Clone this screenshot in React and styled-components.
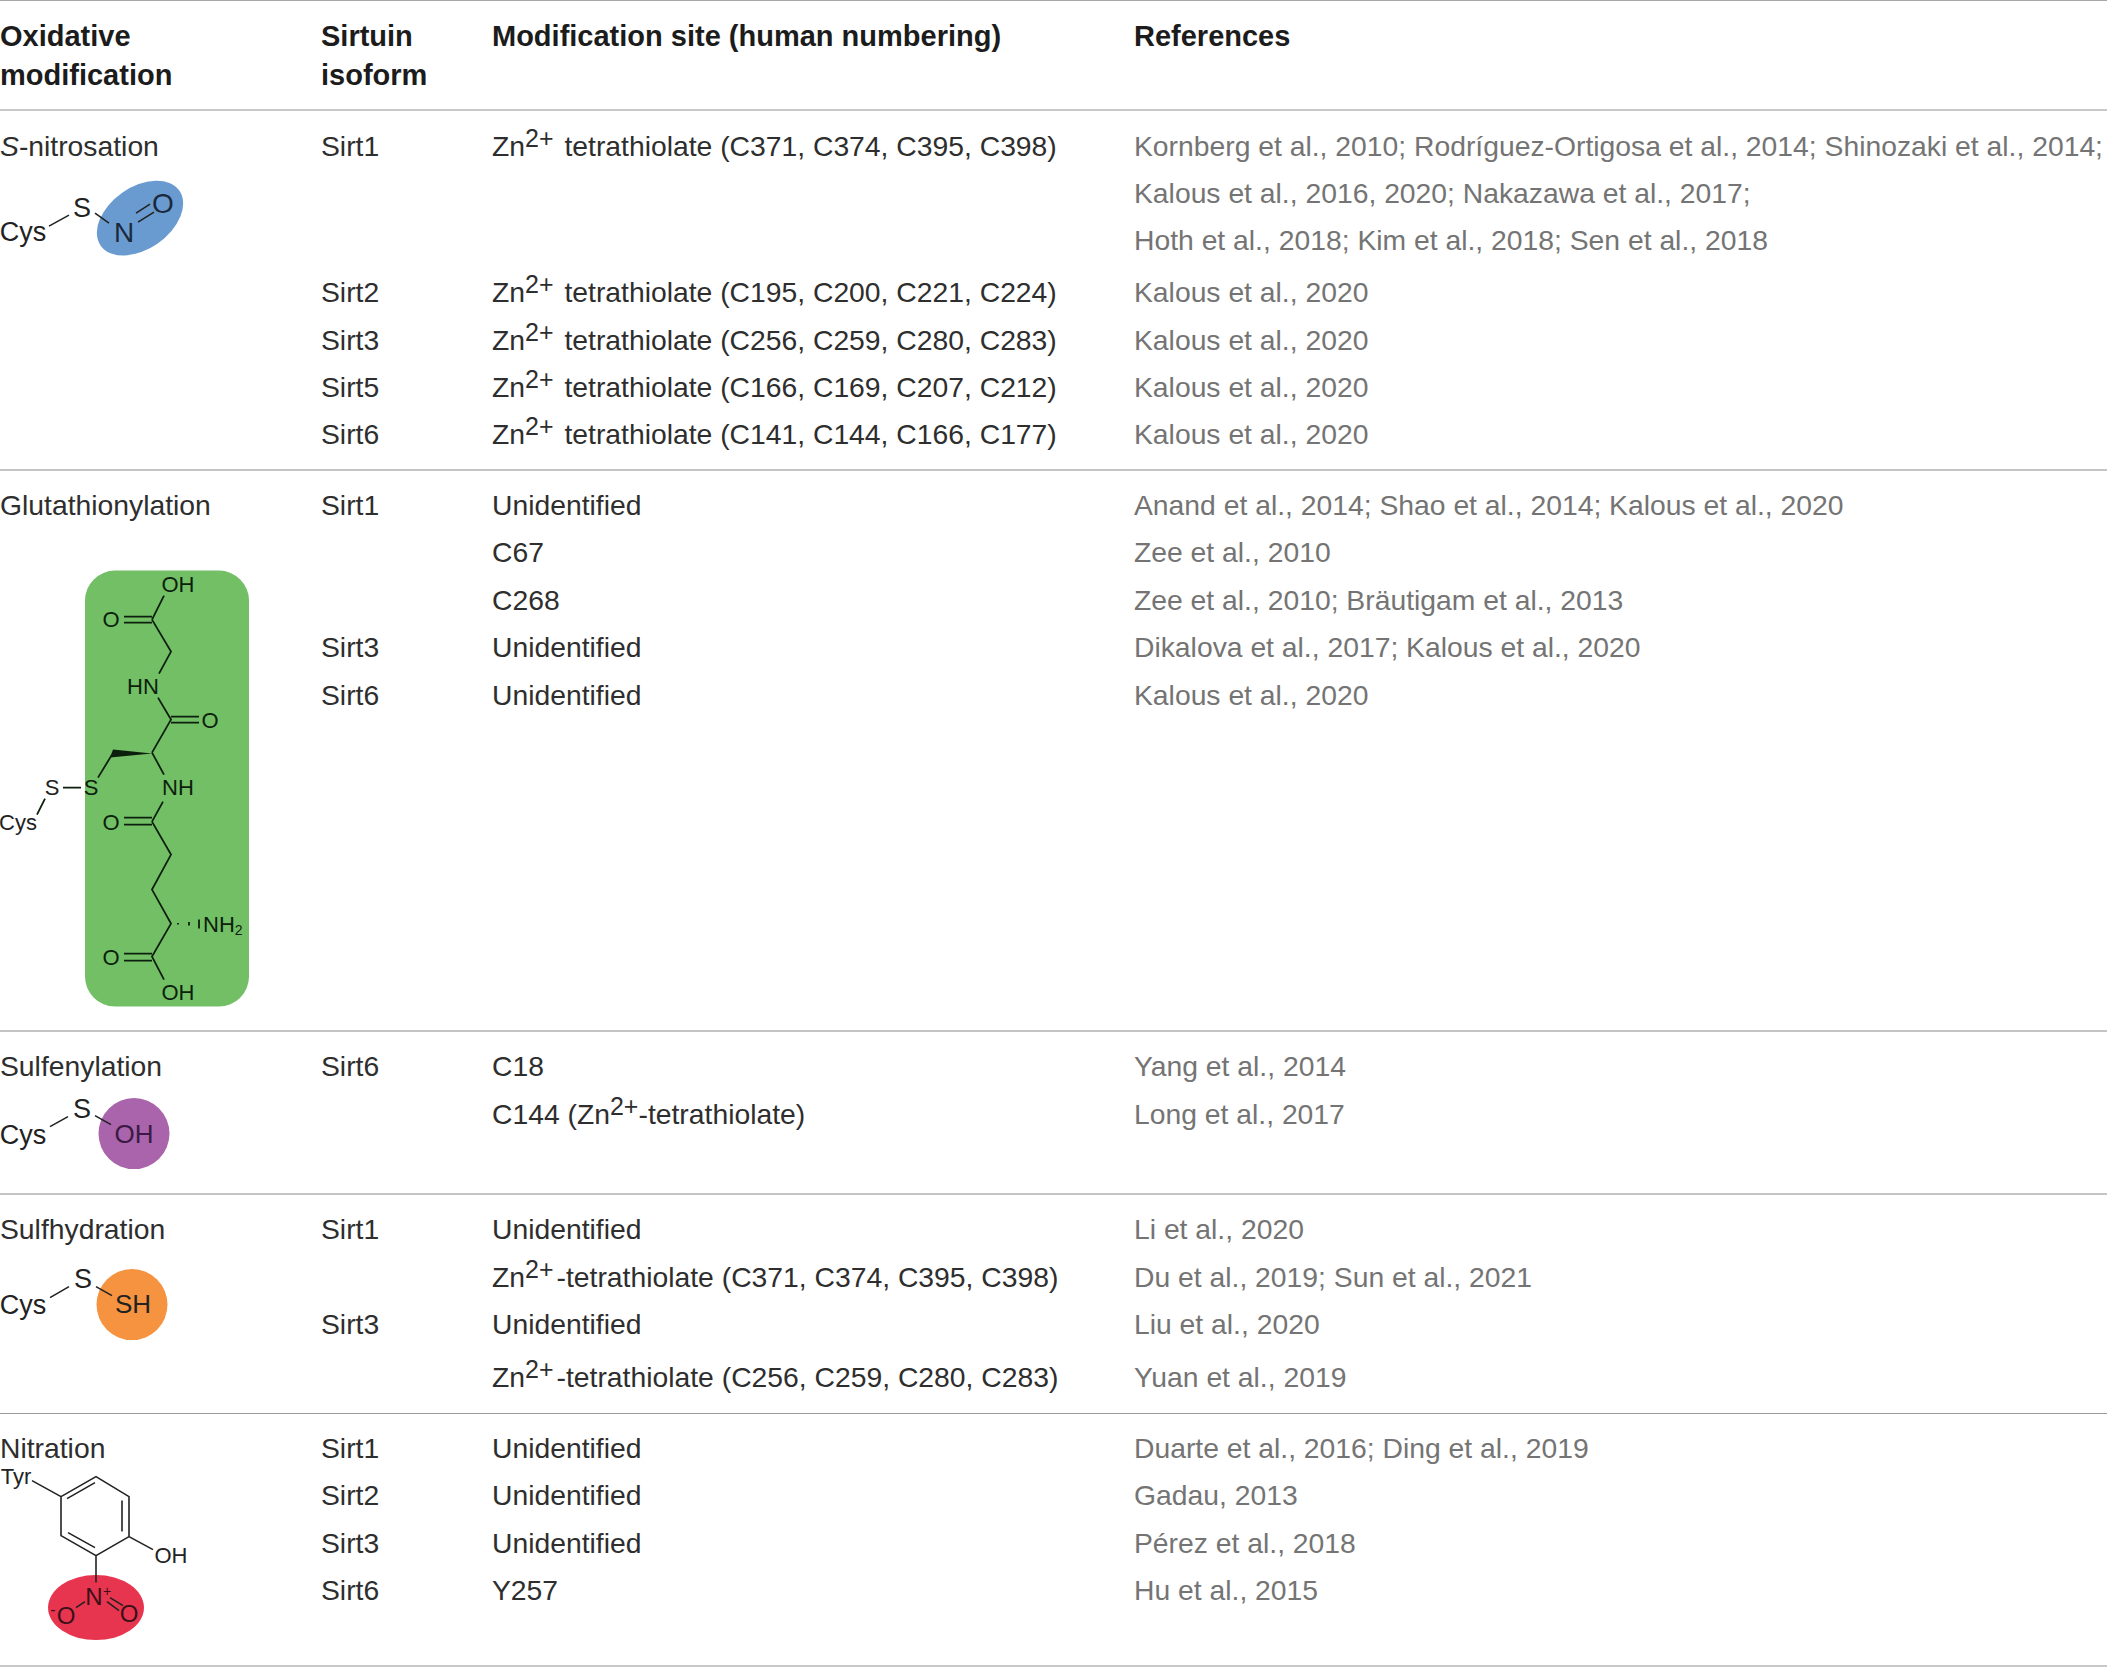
import styled, { createGlobalStyle } from "styled-components";

const GlobalStyle = createGlobalStyle`
  html, body {
    margin: 0;
    padding: 0;
    background: #fff;
  }
  body {
    font-family: "Liberation Sans", Arial, sans-serif;
    font-size: 28.3px;
    color: #2e2e2e;
  }
`;

const Table = styled.div`
  width: 2107px;
`;

const HeadRow = styled.div`
  display: grid;
  grid-template-columns: 321px 171px 642px 1fr;
  height: 111px;
  padding-top: 16px;
  box-sizing: border-box;
  border-top: 1px solid #a8a8a8;
  border-bottom: 2px solid #c8c8c8;
  font-size: 29px;
  font-weight: 700;
  line-height: 38.5px;
  color: #1c1c1c;
`;

const Section = styled.section`
  display: grid;
  grid-template-columns: 321px 1fr;
  height: ${(p) => p.$height}px;
  padding-top: ${(p) => p.$pad}px;
  box-sizing: border-box;
  border-bottom: ${(p) => p.$rule};
`;

const Lead = styled.div`
  display: flex;
  flex-direction: column;
`;

const LeadLabel = styled.div`
  height: 47.4px;
  line-height: 47.4px;
  flex-shrink: 0;
`;

const Rows = styled.div`
  display: flex;
  flex-direction: column;
`;

const Row = styled.div`
  display: grid;
  grid-template-columns: 171px 642px 1fr;
  margin-top: ${(p) => p.$gap || 0}px;
  line-height: 47.4px;
`;

const Refs = styled.div`
  color: #747474;
  white-space: nowrap;
`;

const Site = styled.div`
  white-space: nowrap;
`;

const Sup = styled.sup`
  font-size: 25px;
  line-height: 0;
  vertical-align: 9px;
  margin-right: ${(p) => p.$after || 0}px;
`;

const Drawing = styled.svg`
  display: block;
  flex-shrink: 0;
  overflow: visible;
`;

const Atom = styled.text`
  font-family: "Liberation Sans", Arial, sans-serif;
  font-size: ${(p) => p.$size}px;
  fill: ${(p) => p.$fill || "#222"};
  text-anchor: ${(p) => p.$anchor || "middle"};
  dominant-baseline: central;
`;

const Bonds = styled.path`
  fill: none;
  stroke: ${(p) => p.$stroke || "#222"};
  stroke-width: ${(p) => p.$width || 1.6}px;
`;

const Zn = ({ dash, children }) => (
  <>
    Zn<Sup $after={3}>2+</Sup>
    {dash ? "-" : " "}tetrathiolate {children}
  </>
);

const Nitrosyl = () => (
  <Drawing width="200" height="100" viewBox="0 169.9 200 100">
    <ellipse cx="140" cy="218" rx="48" ry="31" fill="#6a9bd0" transform="rotate(-35 140 218)" />
    <Atom x="23" y="232" $size={27}>Cys</Atom>
    <Atom x="82" y="207.5" $size={27}>S</Atom>
    <Atom x="124" y="232.5" $size={28} $fill="#1a2a3c">N</Atom>
    <Atom x="163" y="203.5" $size={28} $fill="#1a2a3c">O</Atom>
    <Bonds d="M49 226L69 215M95 213L109 223M136 213L150 204M138 222L154 212" />
  </Drawing>
);

const Glutathione = () => (
  <Drawing width="300" height="480" viewBox="0 529.4 300 480">
    <rect x="85" y="571" width="164" height="436" rx="30" fill="#73bf66" />
    <Bonds
      $stroke="#0c1f0c"
      $width={1.8}
      d="M124 617H152M124 623H152M152 620L164 596M152 620L171 652L159 674M158 698L171 720L152 753M171 717H199M171 723H199M112 755L98 778M152 753L164 775M163 802L152 822M124 818H152M124 825H152M152 822L171 855L152 890L171 924L152 957L164 980M124 954H152M124 961H152M63 788H81M45 799L37 815M199 920V929M189 922.5V926M178 923.5V925"
    />
    <path d="M152 754L113 750L110 758Z" fill="#0c1f0c" />
    <Atom x="178" y="585" $size={22} $fill="#0c1f0c">OH</Atom>
    <Atom x="111" y="620" $size={22} $fill="#0c1f0c">O</Atom>
    <Atom x="143" y="687" $size={22} $fill="#0c1f0c">HN</Atom>
    <Atom x="210" y="721" $size={22} $fill="#0c1f0c">O</Atom>
    <Atom x="91" y="788" $size={22} $fill="#0c1f0c">S</Atom>
    <Atom x="178" y="788" $size={22} $fill="#0c1f0c">NH</Atom>
    <Atom x="111" y="823" $size={22} $fill="#0c1f0c">O</Atom>
    <Atom x="203" y="925" $size={22} $fill="#0c1f0c" $anchor="start">
      NH<tspan fontSize="14" dy="5">2</tspan>
    </Atom>
    <Atom x="111" y="958" $size={22} $fill="#0c1f0c">O</Atom>
    <Atom x="178" y="993" $size={22} $fill="#0c1f0c">OH</Atom>
    <Atom x="52" y="788" $size={22}>S</Atom>
    <Atom x="18" y="823" $size={22}>Cys</Atom>
  </Drawing>
);

const Sulfenyl = () => (
  <Drawing width="200" height="90" viewBox="0 1090.4 200 90">
    <circle cx="134" cy="1134" r="35.5" fill="#a964ab" />
    <Atom x="23" y="1135" $size={27}>Cys</Atom>
    <Atom x="82" y="1109" $size={27}>S</Atom>
    <Atom x="134" y="1134" $size={26} $fill="#3a1a44">OH</Atom>
    <Bonds d="M50 1127L68 1117M95 1116L111 1125" />
  </Drawing>
);

const Persulfide = () => (
  <Drawing width="200" height="90" viewBox="0 1253.4 200 90">
    <circle cx="132" cy="1305" r="35.5" fill="#f59340" />
    <Atom x="23" y="1305" $size={27}>Cys</Atom>
    <Atom x="83" y="1279" $size={27}>S</Atom>
    <Atom x="133" y="1304" $size={26}>SH</Atom>
    <Bonds d="M50 1298L69 1287M96 1287L112 1296" />
  </Drawing>
);

const NitroTyrosine = () => (
  <Drawing width="200" height="180" viewBox="0 1472.4 200 180">
    <ellipse cx="96" cy="1608" rx="48" ry="32.5" fill="#e8354f" />
    <Bonds d="M96 1477L129 1497V1537L96 1556L61 1536V1497ZM67 1499L95 1483M122 1501V1532M68 1533L95 1548M32 1481L61 1497M129 1537L153 1550M96 1556V1583M76 1608L85 1602M110 1598L123 1606M107 1602L119 1611" />
    <Atom x="16" y="1476.5" $size={22}>Tyr</Atom>
    <Atom x="171" y="1556" $size={22}>OH</Atom>
    <Atom x="94" y="1597" $size={24} $fill="#3c1018">N</Atom>
    <Atom x="107" y="1591" $size={14} $fill="#3c1018">+</Atom>
    <Atom x="66" y="1616" $size={24} $fill="#3c1018">O</Atom>
    <Atom x="53" y="1610" $size={16} $fill="#3c1018">-</Atom>
    <Atom x="129" y="1614" $size={24} $fill="#3c1018">O</Atom>
  </Drawing>
);

const K2020 = "Kalous et al., 2020";

const sections = [
  {
    label: (
      <>
        <i>S</i>-nitrosation
      </>
    ),
    drawing: <Nitrosyl />,
    height: 360,
    pad: 11.5,
    rule: "2px solid #c4c4c4",
    rows: [
      { sirt: "Sirt1", site: <Zn>(C371, C374, C395, C398)</Zn>, refs: ["Kornberg et al., 2010; Rodríguez-Ortigosa et al., 2014; Shinozaki et al., 2014;", "Kalous et al., 2016, 2020; Nakazawa et al., 2017;", "Hoth et al., 2018; Kim et al., 2018; Sen et al., 2018"] },
      { sirt: "Sirt2", site: <Zn>(C195, C200, C221, C224)</Zn>, refs: [K2020], gap: 4.5 },
      { sirt: "Sirt3", site: <Zn>(C256, C259, C280, C283)</Zn>, refs: [K2020] },
      { sirt: "Sirt5", site: <Zn>(C166, C169, C207, C212)</Zn>, refs: [K2020] },
      { sirt: "Sirt6", site: <Zn>(C141, C144, C166, C177)</Zn>, refs: [K2020] },
    ],
  },
  {
    label: "Glutathionylation",
    drawing: <Glutathione />,
    height: 561,
    pad: 11,
    rule: "2px solid #c4c4c4",
    rows: [
      { sirt: "Sirt1", site: "Unidentified", refs: ["Anand et al., 2014; Shao et al., 2014; Kalous et al., 2020"] },
      { sirt: "", site: "C67", refs: ["Zee et al., 2010"] },
      { sirt: "", site: "C268", refs: ["Zee et al., 2010; Bräutigam et al., 2013"] },
      { sirt: "Sirt3", site: "Unidentified", refs: ["Dikalova et al., 2017; Kalous et al., 2020"] },
      { sirt: "Sirt6", site: "Unidentified", refs: [K2020] },
    ],
  },
  {
    label: "Sulfenylation",
    drawing: <Sulfenyl />,
    height: 163,
    pad: 11,
    rule: "2px solid #c4c4c4",
    rows: [
      { sirt: "Sirt6", site: "C18", refs: ["Yang et al., 2014"] },
      { sirt: "", site: <>C144 (Zn<Sup>2+</Sup>-tetrathiolate)</>, refs: ["Long et al., 2017"], gap: 1 },
    ],
  },
  {
    label: "Sulfhydration",
    drawing: <Persulfide />,
    height: 219,
    pad: 11,
    rule: "1px solid #9a9a9a",
    rows: [
      { sirt: "Sirt1", site: "Unidentified", refs: ["Li et al., 2020"] },
      { sirt: "", site: <Zn dash>(C371, C374, C395, C398)</Zn>, refs: ["Du et al., 2019; Sun et al., 2021"], gap: 1 },
      { sirt: "Sirt3", site: "Unidentified", refs: ["Liu et al., 2020"], gap: -1 },
      { sirt: "", site: <Zn dash>(C256, C259, C280, C283)</Zn>, refs: ["Yuan et al., 2019"], gap: 6 },
    ],
  },
  {
    label: "Nitration",
    drawing: <NitroTyrosine />,
    height: 253,
    pad: 11,
    rule: "2px solid #c8c8c8",
    rows: [
      { sirt: "Sirt1", site: "Unidentified", refs: ["Duarte et al., 2016; Ding et al., 2019"] },
      { sirt: "Sirt2", site: "Unidentified", refs: ["Gadau, 2013"] },
      { sirt: "Sirt3", site: "Unidentified", refs: ["Pérez et al., 2018"] },
      { sirt: "Sirt6", site: "Y257", refs: ["Hu et al., 2015"] },
    ],
  },
];

export default function App() {
  return (
    <Table>
      <GlobalStyle />
      <HeadRow>
        <div>
          Oxidative
          <br />
          modification
        </div>
        <div>
          Sirtuin
          <br />
          isoform
        </div>
        <div>Modification site (human numbering)</div>
        <div>References</div>
      </HeadRow>
      {sections.map((section, i) => (
        <Section key={i} $height={section.height} $pad={section.pad} $rule={section.rule}>
          <Lead>
            <LeadLabel>{section.label}</LeadLabel>
            {section.drawing}
          </Lead>
          <Rows>
            {section.rows.map((row, j) => (
              <Row key={j} $gap={row.gap}>
                <div>{row.sirt}</div>
                <Site>{row.site}</Site>
                <Refs>
                  {row.refs.map((line) => (
                    <div key={line}>{line}</div>
                  ))}
                </Refs>
              </Row>
            ))}
          </Rows>
        </Section>
      ))}
    </Table>
  );
}
